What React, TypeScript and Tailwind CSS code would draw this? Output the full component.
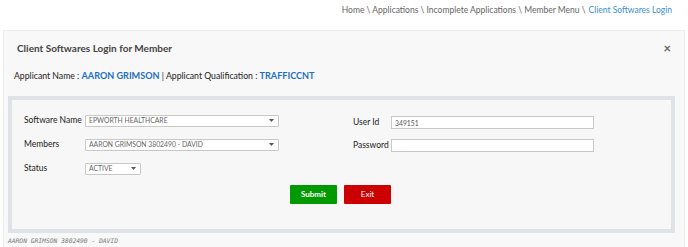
import React from 'react';

const Caret = () => (
  <svg width="5" height="3" viewBox="0 0 5 3" className="shrink-0">
    <path d="M0 0h5L2.5 3z" fill="#555" />
  </svg>
);

const SelectBox = ({ value, width }: { value: string; width: string }) => (
  <div className={`${width} h-[12px] bg-white border border-[#c8c8c8] rounded-[1px] flex items-center justify-between pl-[3px] pr-[4px]`}>
    <span className="text-[6.8px] text-[#666] leading-none uppercase whitespace-nowrap">{value}</span>
    <Caret />
  </div>
);

const App = () => {
  return (
    <div className="w-[688px] h-[247px] bg-white overflow-hidden font-['Lato',sans-serif]">
      {/* Breadcrumb */}
      <div className="h-[30px] flex justify-end items-start pt-[4px] pr-[16px] text-[8.5px] text-[#666]">
        <span>Home \ Applications \ Incomplete Applications \ Member Menu \ </span>
        <span className="text-[#3a8fd6] ml-[3px]">Client Softwares Login</span>
      </div>

      {/* Panel */}
      <div className="mx-[3px] h-[230px] bg-[#f8f8f8] border border-[#ececec]">
        <div className="flex items-center justify-between pl-[13px] pr-[13px] pt-[10px]">
          <h2 className="text-[10px] font-bold text-[#444]">Client Softwares Login for Member</h2>
          <span className="text-[13px] font-bold text-[#666] leading-none">×</span>
        </div>
        <div className="pl-[10px] pt-[13px] text-[8.7px] text-[#222]">
          Applicant Name : <span className="font-bold text-[#1f6fbf] text-[9.1px]">AARON GRIMSON</span> | Applicant Qualification :{' '}
          <span className="font-bold text-[#1f6fbf] text-[9.1px]">TRAFFICCNT</span>
        </div>

        {/* Form box */}
        <div className="ml-[4px] mr-[9px] mt-[13px] h-[137px] border-[4px] border-[#dfe3e8] bg-[#f7f7f7] pt-[15px] pl-[12px]">
          <div className="flex">
            <div className="w-[329px] flex flex-col gap-[12px]">
              <div className="flex items-center h-[12px]">
                <span className="w-[61px] text-[8.5px] text-[#222] whitespace-nowrap">Software Name</span>
                <SelectBox value="Epworth Healthcare" width="w-[194px]" />
              </div>
              <div className="flex items-center h-[12px]">
                <span className="w-[61px] text-[8.5px] text-[#222]">Members</span>
                <SelectBox value="Aaron Grimson 3802490 - David" width="w-[194px]" />
              </div>
              <div className="flex items-center h-[12px]">
                <span className="w-[61px] text-[8.5px] text-[#222]">Status</span>
                <SelectBox value="Active" width="w-[56px]" />
              </div>
            </div>
            <div className="flex flex-col gap-[11px] pt-[2px]">
              <div className="flex items-center h-[12px]">
                <span className="w-[38px] text-[8.5px] text-[#222] whitespace-nowrap">User Id</span>
                <div className="w-[203px] h-[13px] bg-white border border-[#c8c8c8] flex items-center pl-[3px] text-[6.8px] text-[#555]">
                  349151
                </div>
              </div>
              <div className="flex items-center h-[12px]">
                <span className="w-[38px] text-[8.5px] text-[#222] whitespace-nowrap">Password</span>
                <div className="w-[203px] h-[13px] bg-white border border-[#c8c8c8]" />
              </div>
            </div>
          </div>
          <div className="flex justify-center gap-[7px] mt-[10px] pr-[14px]">
            <button className="w-[47px] h-[19px] bg-[#009a00] text-white text-[8px] font-bold rounded-[1px]">Submit</button>
            <button className="w-[47px] h-[19px] bg-[#cc0000] text-white text-[8px] rounded-[1px]">Exit</button>
          </div>
        </div>

        <div className="pl-[4px] pt-[3px] text-[6.3px] italic text-[#777] font-['DejaVu_Sans_Mono',monospace]">
          AARON GRIMSON 3802490 - DAVID
        </div>
      </div>
    </div>
  );
};

export default App;
